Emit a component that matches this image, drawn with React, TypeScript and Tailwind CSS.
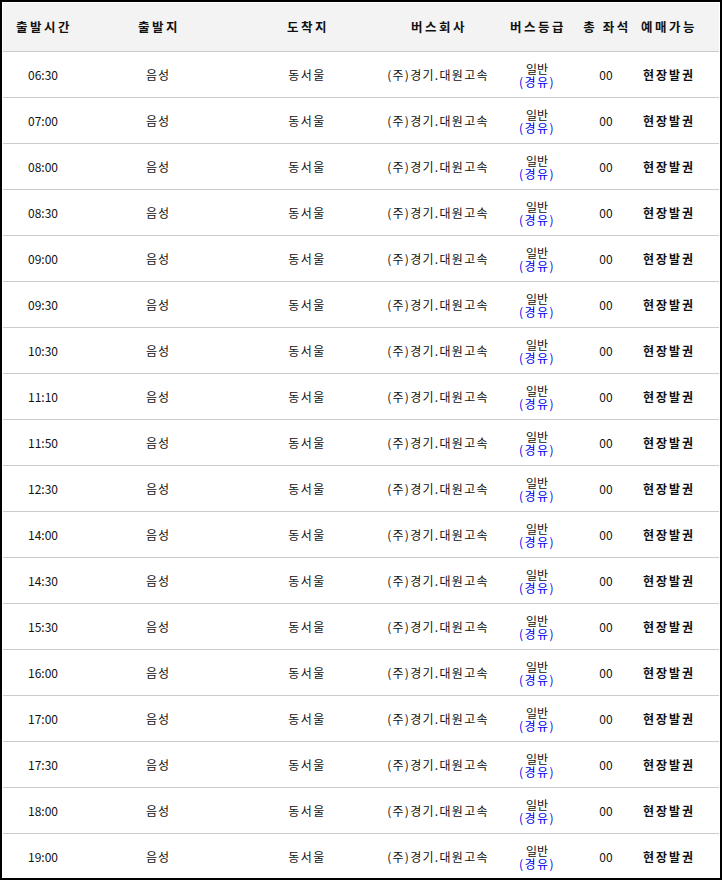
const TIMES = [
  '06:30', '07:00', '08:00', '08:30', '09:00', '09:30', '10:30', '11:10', '11:50',
  '12:30', '14:00', '14:30', '15:30', '16:00', '17:00', '17:30', '18:00', '19:00',
]

const COLS = 'grid grid-cols-[80px_150px_148px_114px_84px_54px_70px_1fr] items-center'

export default function App() {
  return (
    <div
      className="w-[722px] h-[880px] overflow-hidden bg-white border-2 border-black p-px text-[12px] text-[#111]"
      style={{ fontFamily: '"Noto Sans CJK KR", "Noto Sans", sans-serif' }}
    >
      {/* Header */}
      <div className={`${COLS} h-[49px] bg-[#f3f3f3] border-b border-[#cccccc] font-bold text-[12.5px] tracking-[2.5px]`}>
        <div className="text-center pl-[2px]">출발시간</div>
        <div className="text-center pl-[2px]">출발지</div>
        <div className="text-center pl-[2px]">도착지</div>
        <div className="text-center pl-[2px]">버스회사</div>
        <div className="text-center pl-[2px]">버스등급</div>
        <div className="text-center pl-[2px] whitespace-nowrap">총 좌석</div>
        <div className="text-center pl-[2px]">예매가능</div>
        <div />
      </div>

      {/* Rows */}
      {TIMES.map((t) => (
        <div key={t} className={`${COLS} h-[46px] border-b border-[#cccccc]`}>
          <div className="text-center">{t}</div>
          <div className="text-center tracking-[1px]">음성</div>
          <div className="text-center tracking-[1.5px]">동서울</div>
          <div className="text-center tracking-[1.3px] whitespace-nowrap">(주)경기.대원고속</div>
          <div className="flex flex-col items-center pt-px">
            <span className="leading-[12px]">일반</span>
            <span className="leading-[13px] text-[#0000ee] tracking-[1.5px]">(경유)</span>
          </div>
          <div className="text-center">00</div>
          <div className="text-center font-bold tracking-[2px] pl-[2px]">현장발권</div>
          <div />
        </div>
      ))}
    </div>
  )
}
